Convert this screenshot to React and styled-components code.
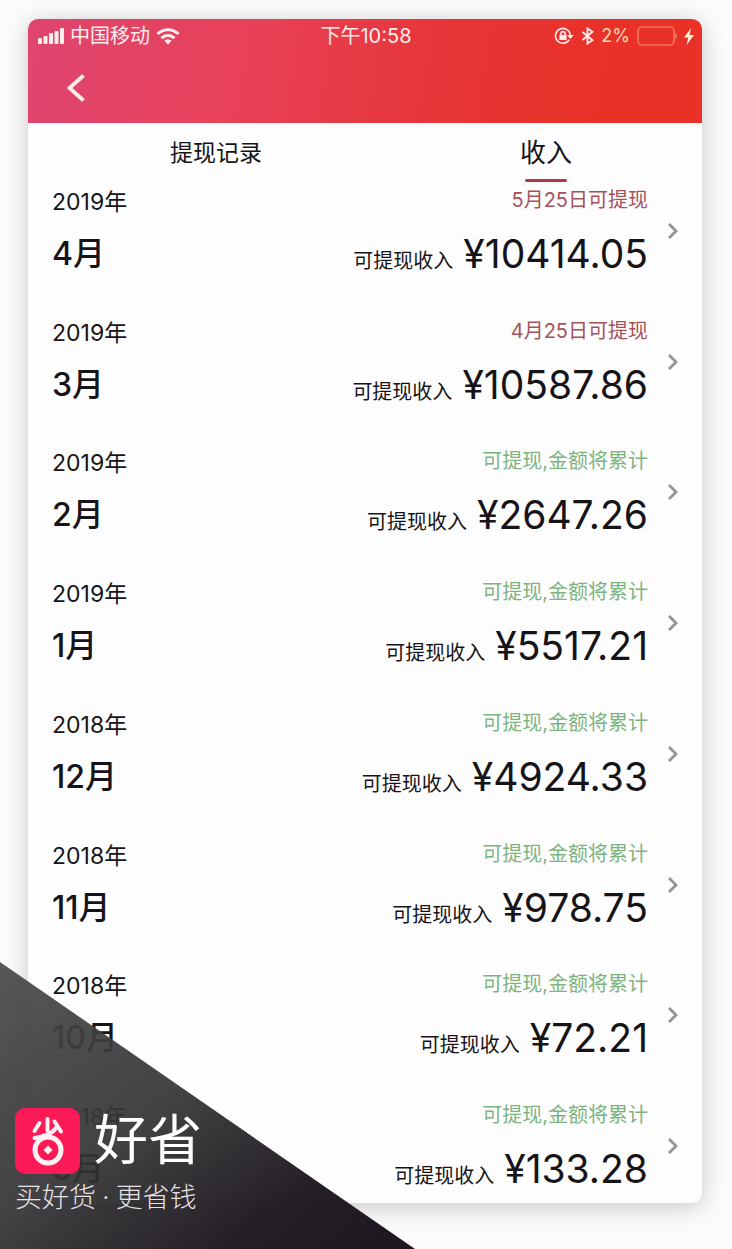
import { useState } from "react"
import styled, { createGlobalStyle } from "styled-components"

const GlobalStyle = createGlobalStyle`
    * {
        box-sizing: border-box;
    }

    body {
        margin: 0;
        background-color: #fdfcfd;
        color: #161418;
        font-family: Inter, "Noto Sans CJK SC", sans-serif;
    }

    button {
        border: none;
        padding: 0;
        background: none;
        color: inherit;
        font-family: inherit;
        cursor: pointer;
    }
`

const Page = styled.main`
    position: relative;
    display: flex;
    min-height: 100vh;
    padding: 19px 30px 46px 28px;
    overflow: hidden;
`

const Card = styled.section`
    flex: 1;
    display: flex;
    flex-direction: column;
    border-radius: 10px;
    background-color: #fefdfe;
    box-shadow: 0 4px 24px rgba(60, 60, 60, 0.28);
    overflow: hidden;
`

const Header = styled.header`
    height: 104px;
    background: linear-gradient(100deg, #df4570 0%, #e8415a 30%, #e63639 60%, #e93127 85%, #e93127 100%);
    color: #ffeceb;
`

const StatusBar = styled.div`
    display: grid;
    grid-template-columns: 1fr auto 1fr;
    align-items: center;
    height: 34px;
    padding: 0 8px 0 10px;
    font-size: 20px;
    line-height: 24px;
`

const StatusGroup = styled.div`
    display: flex;
    align-items: center;
    justify-content: ${props => props.$end ? "flex-end" : "flex-start"};
    gap: ${props => props.$end ? "7px" : "6px"};
`

const Battery = styled.span`
    font-size: 18px;
    color: #ffd9b8;
`

const BackButton = styled.button`
    display: flex;
    align-items: center;
    height: 70px;
    margin-left: 36px;
`

const Tabs = styled.nav`
    display: flex;
    justify-content: space-between;
    height: 63px;
    padding: 0 130px 0 142px;
`

const Tab = styled.button`
    display: flex;
    flex-direction: column;
    align-items: center;
    justify-content: flex-end;
    height: 59px;
    font-size: ${props => props.$active ? "26px" : "23px"};
    line-height: 36px;

    &::after {
        content: "";
        width: 42px;
        height: 3px;
        margin-top: 8px;
        border-radius: 2px;
        background-color: ${props => props.$active ? "#b23a44" : "transparent"};
    }
`

const List = styled.ul`
    flex: 1;
    display: flex;
    flex-direction: column;
    justify-content: space-between;
    margin: 0;
    padding: 0 24px 12px;
    list-style: none;
`

const Row = styled.a`
    display: flex;
    align-items: center;
    justify-content: space-between;
    height: 90px;
    color: inherit;
    text-decoration: none;
`

const Period = styled.div`
    flex: 1;
    display: flex;
    flex-direction: column;
    gap: 14px;
`

const Year = styled.span`
    font-size: 23px;
    line-height: 32px;
`

const Month = styled.span`
    font-size: 32px;
    font-weight: 500;
    line-height: 44px;
`

const Income = styled.div`
    display: flex;
    flex-direction: column;
    align-items: flex-end;
    gap: 18px;
    margin-right: 20px;
`

const Note = styled.span`
    font-size: 20px;
    line-height: 28px;
    color: ${props => props.$pending ? "#a4525a" : "#7cb47e"};
`

const Total = styled.span`
    display: flex;
    align-items: baseline;
    gap: 10px;
    font-size: 20px;
    line-height: 28px;
`

const Amount = styled.strong`
    font-size: 39px;
    font-weight: 400;
    line-height: 44px;
`

const Promo = styled.aside`
    position: absolute;
    left: 0;
    bottom: 0;
    width: 415px;
    height: 287px;
    padding: 146px 0 0 15px;
    background: linear-gradient(145deg, rgba(75, 75, 75, 0.93) 0%, rgba(52, 51, 53, 0.93) 45%, rgba(30, 25, 32, 0.97) 76%, #1c171e 100%);
    clip-path: polygon(0 0, 100% 100%, 0 100%);
    color: #fff;
`

const Brand = styled.div`
    display: flex;
    align-items: center;
    gap: 14px;
    height: 66px;
`

const BrandName = styled.span`
    font-size: 54px;
    font-weight: 400;
    line-height: 66px;
`

const Slogan = styled.p`
    display: flex;
    gap: 6px;
    margin: 6px 0 0;
    font-size: 27px;
    font-weight: 300;
    line-height: 36px;
    color: #e4e2e5;
`

const months = [
    { year: 2019, month: 4, note: "5月25日可提现", pending: true, amount: "10414.05" },
    { year: 2019, month: 3, note: "4月25日可提现", pending: true, amount: "10587.86" },
    { year: 2019, month: 2, note: "可提现,金额将累计", amount: "2647.26" },
    { year: 2019, month: 1, note: "可提现,金额将累计", amount: "5517.21" },
    { year: 2018, month: 12, note: "可提现,金额将累计", amount: "4924.33" },
    { year: 2018, month: 11, note: "可提现,金额将累计", amount: "978.75" },
    { year: 2018, month: 10, note: "可提现,金额将累计", amount: "72.21" },
    { year: 2018, month: 9, note: "可提现,金额将累计", amount: "133.28" },
]

function SignalIcon() {
    return (
        <svg width="26" height="16" viewBox="0 0 26 16" fill="currentColor" aria-hidden="true">
            <rect x="0" y="10" width="4" height="6" rx="1" />
            <rect x="5.5" y="8" width="4" height="8" rx="1" />
            <rect x="11" y="5" width="4" height="11" rx="1" />
            <rect x="16.5" y="3" width="4" height="13" rx="1" />
            <rect x="22" y="0" width="4" height="16" rx="1" />
        </svg>
    )
}

function WifiIcon() {
    return (
        <svg width="24" height="17" viewBox="0 0 24 17" fill="none" stroke="currentColor" strokeWidth="3" aria-hidden="true">
            <path d="M1.5 6a15 15 0 0 1 21 0" />
            <path d="M5.6 10.2a9 9 0 0 1 12.8 0" />
            <path d="M12 16.6l-3.6-3.8a5 5 0 0 1 7.2 0z" fill="currentColor" stroke="none" />
        </svg>
    )
}

function RotationLockIcon() {
    return (
        <svg width="20" height="18" viewBox="0 0 20 18" fill="none" stroke="currentColor" strokeWidth="1.6" aria-hidden="true">
            <path d="M15.2 12.8A7.4 7.4 0 1 1 16.3 8" />
            <path d="M13 8h6.6l-3.2 4z" fill="currentColor" stroke="none" />
            <rect x="5.4" y="8" width="7.2" height="5" fill="currentColor" stroke="none" />
            <path d="M7 8V6.6a2 2 0 0 1 4 0V8" />
        </svg>
    )
}

function BluetoothIcon() {
    return (
        <svg width="13" height="18" viewBox="0 0 13 18" fill="none" stroke="currentColor" strokeWidth="1.9" aria-hidden="true">
            <path d="M1.5 5l10 8.2-5 3.3v-15l5 3.3-10 8.2" />
        </svg>
    )
}

function BatteryIcon() {
    return (
        <svg width="40" height="20" viewBox="0 0 40 20" fill="none" stroke="#f5906f" strokeWidth="1.2" aria-hidden="true">
            <rect x="1" y="1" width="36" height="18" rx="4" />
            <path d="M39 7.5v5" />
        </svg>
    )
}

function BoltIcon() {
    return (
        <svg width="10" height="17" viewBox="0 0 10 17" fill="#fff0cf" aria-hidden="true">
            <path d="M7 0L0 9.6h4.2L2.6 17 10 7H5.6z" />
        </svg>
    )
}

function BackIcon() {
    return (
        <svg width="22" height="28" viewBox="0 0 22 28" fill="none" stroke="currentColor" strokeWidth="3.8" aria-hidden="true">
            <path d="M19.5 1.5L5.5 14l14 12.5" />
        </svg>
    )
}

function ArrowIcon() {
    return (
        <svg width="10" height="16" viewBox="0 0 10 16" fill="none" stroke="#969296" strokeWidth="2.8" aria-hidden="true">
            <path d="M1 1l7 7-7 7" />
        </svg>
    )
}

function LogoIcon() {
    return (
        <svg width="65" height="66" viewBox="0 0 65 66" fill="none" stroke="#fff0f4" strokeLinecap="round" aria-hidden="true">
            <rect width="65" height="66" rx="10" fill="#fb1a55" stroke="none" />
            <path d="M32.5 11v11.5" strokeWidth="4" />
            <path d="M24.5 15l-5 8" strokeWidth="4" />
            <path d="M39.5 13.5l6.5 10" strokeWidth="4" />
            <path d="M41 20C37 26 30 28.5 19.5 30" strokeWidth="4.2" />
            <circle cx="33" cy="42" r="13" strokeWidth="5" />
            <path d="M33 37.5l4.5 4.5-4.5 4.5-4.5-4.5z" fill="#fff0f4" stroke="none" />
        </svg>
    )
}

export default function App() {
    const [tab, setTab] = useState("income")

    return (
        <Page>
            <GlobalStyle />
            <Card>
                <Header>
                    <StatusBar>
                        <StatusGroup>
                            <SignalIcon />
                            <span>中国移动</span>
                            <WifiIcon />
                        </StatusGroup>
                        <time>下午10:58</time>
                        <StatusGroup $end>
                            <RotationLockIcon />
                            <BluetoothIcon />
                            <Battery>2%</Battery>
                            <BatteryIcon />
                            <BoltIcon />
                        </StatusGroup>
                    </StatusBar>
                    <BackButton type="button" aria-label="返回">
                        <BackIcon />
                    </BackButton>
                </Header>

                <Tabs>
                    <Tab type="button" $active={tab === "records"} onClick={() => setTab("records")}>提现记录</Tab>
                    <Tab type="button" $active={tab === "income"} onClick={() => setTab("income")}>收入</Tab>
                </Tabs>

                <List>
                    {months.map(item => (
                        <li key={`${item.year}-${item.month}`}>
                            <Row href={`#${item.year}-${item.month}`}>
                                <Period>
                                    <Year>{item.year}年</Year>
                                    <Month>{item.month}月</Month>
                                </Period>
                                <Income>
                                    <Note $pending={item.pending}>{item.note}</Note>
                                    <Total>
                                        可提现收入
                                        <Amount>¥{item.amount}</Amount>
                                    </Total>
                                </Income>
                                <ArrowIcon />
                            </Row>
                        </li>
                    ))}
                </List>
            </Card>

            <Promo>
                <Brand>
                    <LogoIcon />
                    <BrandName>好省</BrandName>
                </Brand>
                <Slogan>
                    <span>买好货</span>
                    <span>·</span>
                    <span>更省钱</span>
                </Slogan>
            </Promo>
        </Page>
    )
}
